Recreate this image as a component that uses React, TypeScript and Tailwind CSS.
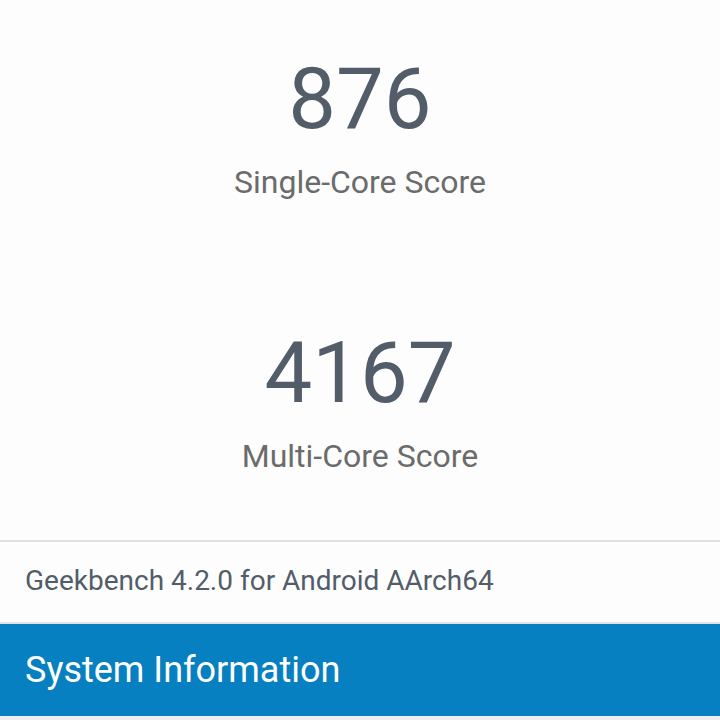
const ScoreBlock = ({ score, label }: { score: string; label: string }) => (
  <div className="flex flex-col items-center">
    <div className="text-[85px] leading-none text-[#535d69]">{score}</div>
    <div className="mt-[24px] text-[32px] leading-none text-[#6b6b6b]">{label}</div>
  </div>
);

export default function App() {
  return (
    <div
      className="flex h-[720px] w-[720px] flex-col overflow-hidden bg-[#fdfdfd]"
      style={{ fontFamily: "Roboto, 'Noto Sans', sans-serif" }}
    >
      <div className="flex h-[540px] flex-col pt-[57px]">
        <ScoreBlock score="876" label="Single-Core Score" />
        <div className="mt-[133px]">
          <ScoreBlock score="4167" label="Multi-Core Score" />
        </div>
      </div>

      <div className="h-[2px] bg-[#e0e0e0]" />
      <div className="flex h-[80px] items-center px-[25px] pb-[3px] text-[28px] text-[#535d69]">
        Geekbench 4.2.0 for Android AArch64
      </div>
      <div className="h-[2px] bg-[#e2e2e2]" />

      <div className="flex h-[92px] items-center bg-[#0780c2] px-[25px] text-[36px] text-white">
        System Information
      </div>
      <div className="flex-1 bg-[#eeeeee]" />
    </div>
  );
}
